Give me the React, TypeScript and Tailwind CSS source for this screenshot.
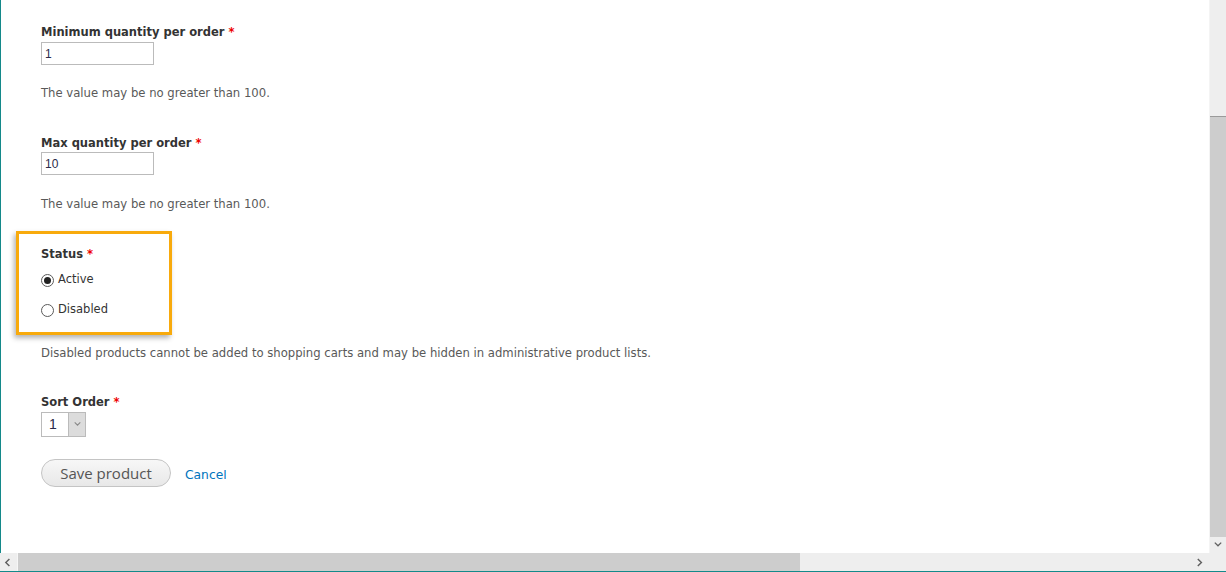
import type { ReactNode } from "react";

const body = { fontFamily: '"DejaVu Sans", "Lucida Grande", sans-serif' };
const field = { fontFamily: '"Liberation Sans", Arial, sans-serif' };

function Label({ children, className = "" }: { children: ReactNode; className?: string }) {
  return (
    <div className={`h-[18px] text-[11.5px] leading-[20px] font-bold text-[#333] ${className}`}>
      {children} <span className="text-[#e00]">*</span>
    </div>
  );
}

function Help({ children, className = "" }: { children: ReactNode; className?: string }) {
  return <p className={`h-[18px] text-[11.65px] leading-[20px] text-[#595959] ${className}`}>{children}</p>;
}

function NumberInput({ value, className = "" }: { value: string; className?: string }) {
  return (
    <div
      className={`flex h-[23px] w-[113px] items-center border border-[#bbb] bg-white px-[3px] text-[12px] text-[#2a2a4a] ${className}`}
      style={field}
    >
      {value}
    </div>
  );
}

function Radio({ label, checked, className = "" }: { label: string; checked?: boolean; className?: string }) {
  return (
    <div className={`flex h-[18px] items-center gap-[4px] text-[11.5px] text-[#333] ${className}`}>
      <span className="flex h-[13px] w-[13px] items-center justify-center rounded-full border border-[#5a5a5a] bg-white">
        {checked && <span className="h-[7px] w-[7px] rounded-full bg-[#222]" />}
      </span>
      {label}
    </div>
  );
}

function Chevron({ dir, className = "" }: { dir: "left" | "right" | "down"; className?: string }) {
  const pts = dir === "left" ? "6,1 2,5 6,9" : dir === "right" ? "2,1 6,5 2,9" : "1,2 5,6 9,2";
  return (
    <svg viewBox="0 0 10 10" className={className} fill="none" stroke="currentColor" strokeWidth="1.6">
      <polyline points={pts} />
    </svg>
  );
}

export default function App() {
  return (
    <div className="flex h-[572px] w-[1226px] flex-col overflow-hidden bg-white" style={body}>
      <div className="flex h-[553px]">
        <div className="flex-1 border-l border-[#14898a] pl-[40px] pt-[22px]">
          <Label>Minimum quantity per order</Label>
          <NumberInput value="1" className="mt-[2px]" />
          <Help className="mt-[18px]">The value may be no greater than 100.</Help>

          <Label className="mt-[32px]">Max quantity per order</Label>
          <NumberInput value="10" className="mt-[1px]" />
          <Help className="mt-[19px]">The value may be no greater than 100.</Help>

          <div className="relative mt-[32px]">
            <Label>Status</Label>
            <Radio label="Active" checked className="mt-[9px]" />
            <Radio label="Disabled" className="mt-[12px]" />
            {/* highlight frame around the status group */}
            <div className="pointer-events-none absolute -left-[25px] -top-[13px] h-[104px] w-[156px] border-[3px] border-[#f8aa0c] shadow-[-2px_3px_5px_rgba(0,0,0,0.3)]" />
          </div>
          <Help className="mt-[24px]">
            Disabled products cannot be added to shopping carts and may be hidden in administrative product lists.
          </Help>

          <Label className="mt-[31px]">Sort Order</Label>
          <div className="mt-[2px] flex h-[25px] w-[45px] border border-[#bbb] bg-white" style={field}>
            <span className="flex flex-1 items-center pl-[7px] text-[14px] text-[#2a2a4a]">1</span>
            <span className="flex w-[17px] items-center justify-center border-l border-[#bbb] bg-[#dcdcdc] text-[#8a8a8a]">
              <Chevron dir="down" className="h-[7px] w-[7px]" />
            </span>
          </div>

          <div className="mt-[22px] flex items-center gap-[14px]">
            <button
              className="h-[28px] w-[130px] rounded-[14px] border border-[#c4c4c4] bg-gradient-to-b from-[#f7f7f7] to-[#e8e8e8] text-[15px] text-[#555]"
              style={{ fontFamily: '"Open Sans", sans-serif' }}
            >
              Save product
            </button>
            <a className="mt-[4px] text-[12.3px] text-[#0074bd]">Cancel</a>
          </div>
        </div>

        <div className="flex w-[17px] flex-col border-l border-[#f4f4f4] bg-[#eeeeee]">
          <div className="h-[116px]" />
          <div className="h-[421px] border-t border-[#9a9a9a] bg-[#cdcdcd]" />
          <div className="flex flex-1 items-center justify-center text-[#606060]">
            <Chevron dir="down" className="h-[8px] w-[8px]" />
          </div>
        </div>
      </div>

      <div className="flex h-[18px] bg-[#eeeeee]">
        <div className="flex w-[18px] items-center justify-center border-r border-[#f6f6f6] text-[#606060]">
          <Chevron dir="left" className="h-[9px] w-[9px]" />
        </div>
        <div className="w-[782px] bg-[#cdcdcd]" />
        <div className="flex-1" />
        <div className="flex w-[17px] items-center justify-center text-[#606060]">
          <Chevron dir="right" className="h-[9px] w-[9px]" />
        </div>
        <div className="w-[17px]" />
      </div>
      <div className="h-[1px] bg-[#14898a]" />
    </div>
  );
}
